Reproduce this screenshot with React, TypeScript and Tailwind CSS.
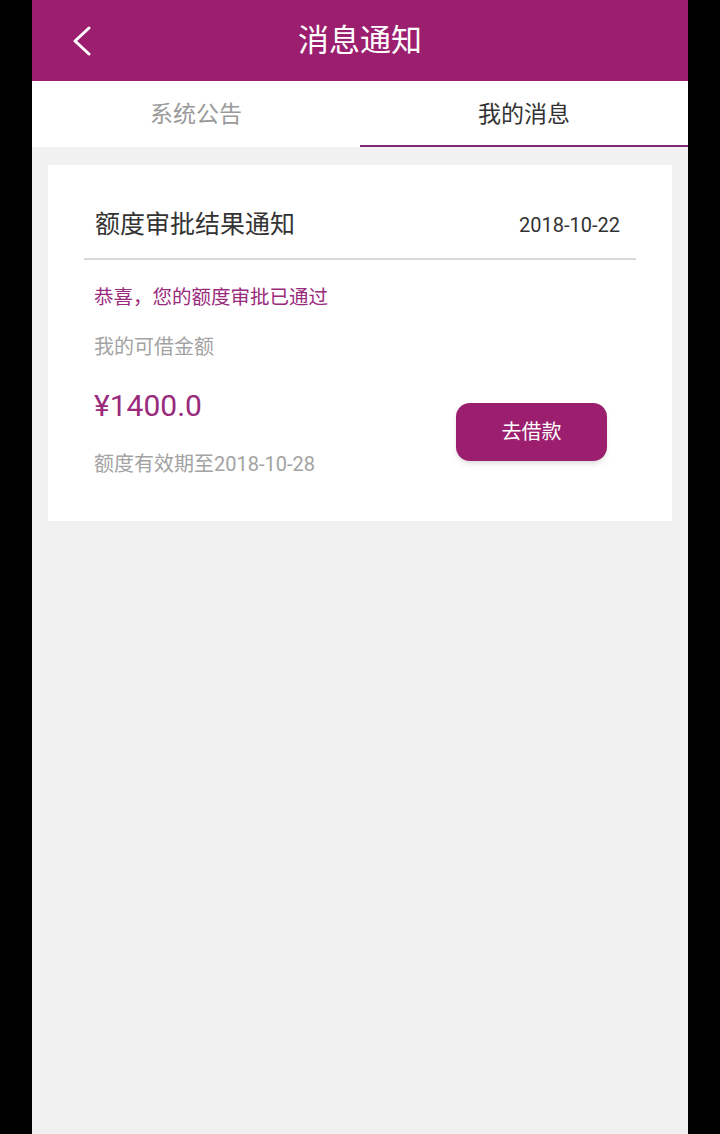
import React from "react";

const font = { fontFamily: '"Roboto", "Noto Sans CJK SC", sans-serif' };

function Header() {
  return (
    <div className="relative h-[81px] bg-[#9c1f6f] flex items-center justify-center">
      <svg className="absolute left-[38px] top-[26px]" width="24" height="30" viewBox="0 0 24 30" fill="none">
        <polyline points="19,2 5,15 19,28" stroke="#ffffff" strokeWidth="3" strokeLinecap="round" strokeLinejoin="round" />
      </svg>
      <span className="text-[31px] text-white leading-none">消息通知</span>
    </div>
  );
}

function Tabs() {
  return (
    <div className="flex h-[66px] bg-white">
      <div className="flex-1 flex items-center justify-center pt-[4px] text-[23px] text-[#9a9a9a] border-b-2 border-transparent">
        系统公告
      </div>
      <div className="flex-1 flex items-center justify-center pt-[4px] text-[23px] text-[#333333] border-b-2 border-[#7e2a70]">
        我的消息
      </div>
    </div>
  );
}

export default function App() {
  return (
    <div className="bg-black w-full min-h-[1134px]" style={font}>
      <div className="w-[656px] mx-auto min-h-[1134px] bg-[#f1f1f1]">
        <Header />
        <Tabs />
        <div className="px-4 pt-[18px]">
          <div className="bg-white">
            {/* title row */}
            <div className="flex items-center justify-between pl-[47px] pr-[52px] pt-[44px] pb-[17px]">
              <span className="text-[25px] leading-[32px] text-[#333333]">额度审批结果通知</span>
              <span className="text-[20px] leading-[32px] text-[#333333]">2018-10-22</span>
            </div>
            <div className="mx-[36px] h-[2px] bg-[#d8d8d8]" />
            <div className="pl-[46px] pr-[65px] pt-[24px] pb-[43px]">
              <div className="text-[19.5px] leading-[28px] text-[#9a2a7c]">恭喜，您的额度审批已通过</div>
              <div className="mt-[21px] text-[20px] leading-[28px] text-[#a3a3a3]">我的可借金额</div>
              <div className="mt-[25px] flex items-center justify-between">
                <div className="flex flex-col">
                  <span className="text-[30px] leading-[40px] text-[#9a2a7c]">¥1400.0</span>
                  <span className="mt-[24px] text-[20px] leading-[28px] text-[#a3a3a3]">额度有效期至2018-10-28</span>
                </div>
                <button className="w-[151px] h-[58px] rounded-[14px] bg-[#9c1f6f] text-white text-[20px] shadow-md">
                  去借款
                </button>
              </div>
            </div>
          </div>
        </div>
      </div>
    </div>
  );
}
